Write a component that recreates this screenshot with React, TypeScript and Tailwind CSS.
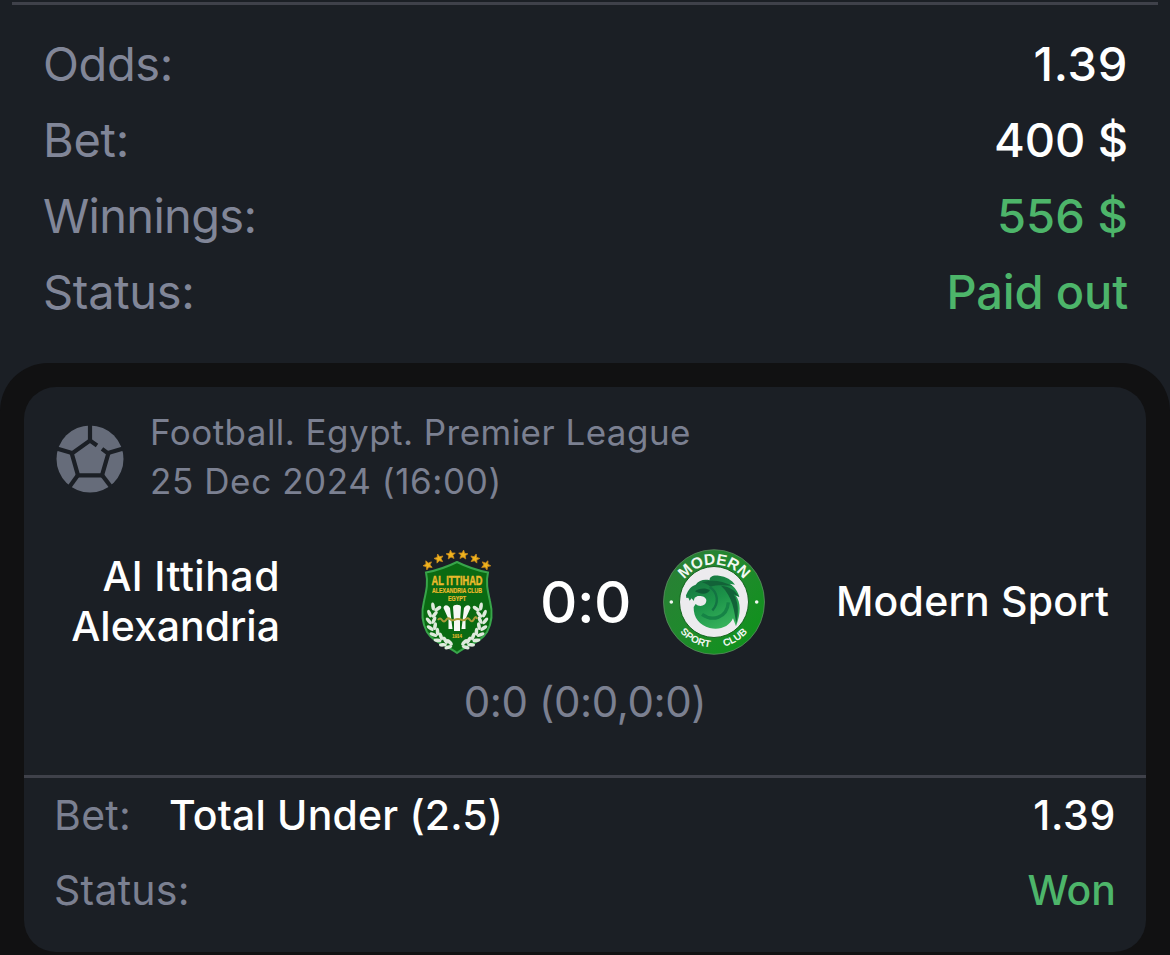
import React from "react";

type SummaryRow = { label: string; value: string; tone: string; spacing: string; valueSpacing: string };

const summary: SummaryRow[] = [
  { label: "Odds:", value: "1.39", tone: "text-white", spacing: "tracking-[-0.400px]", valueSpacing: "tracking-[0.700px]" },
  { label: "Bet:", value: "400 $", tone: "text-white", spacing: "tracking-[-0.300px]", valueSpacing: "tracking-[-0.100px]" },
  { label: "Winnings:", value: "556 $", tone: "text-[#4db56a]", spacing: "tracking-[-0.700px]", valueSpacing: "tracking-[0.100px]" },
  { label: "Status:", value: "Paid out", tone: "text-[#4db56a]", spacing: "tracking-[-0.300px]", valueSpacing: "tracking-[-0.150px]" },
];

function BallIcon() {
  return (
    <svg className="h-[68px] w-[68px] shrink-0" viewBox="0 0 68 68" fill="none">
      <circle cx="34" cy="34" r="33.5" fill="#666c7a" />
      <g stroke="#1b1f25" strokeWidth="4.200">
        <path d="M34 0V16" />
        <path d="M0 23.300L16 28" />
        <path d="M68 23.300L52 28" />
        <path d="M22 50L13 62.500" />
        <path d="M46 50L55.500 62.500" />
        <path d="M41 20.500L34 15.500L15.800 28.500L22 50.300H46L52.300 28.500L46 23.900" />
      </g>
    </svg>
  );
}

const starPath = "M0 -4.600L1.300 -1.500L4.600 -1.300L2.100 0.800L2.900 4L0 2.300L-2.900 4L-2.100 0.800L-4.600 -1.300L-1.300 -1.500Z";
const stars = [
  { x: 8.8, y: 17, r: -25 },
  { x: 19.8, y: 10.5, r: -15 },
  { x: 31.8, y: 6.7, r: -5 },
  { x: 44.2, y: 6.7, r: 5 },
  { x: 56, y: 10.5, r: 15 },
  { x: 67, y: 17, r: 25 },
];
const leaves = [
  { x: 31, y: 97, r: -75 },
  { x: 26, y: 95, r: -62 },
  { x: 21, y: 91, r: -50 },
  { x: 17, y: 86, r: -35 },
  { x: 14, y: 80, r: -22 },
  { x: 12.5, y: 73.5, r: -8 },
  { x: 13, y: 67, r: 8 },
  { x: 16, y: 60.5, r: 24 },
];

function Laurel() {
  return (
    <g fill="#dfeadd">
      {leaves.map((l) => (
        <g key={l.y} transform={`translate(${l.x} ${l.y}) rotate(${l.r})`}>
          <ellipse cx="-2.600" cy="-1" rx="1.800" ry="4" transform="rotate(-32 -2.600 -1)" />
          <ellipse cx="2.600" cy="-1" rx="1.800" ry="4" transform="rotate(32 2.600 -1)" />
        </g>
      ))}
    </g>
  );
}

function IttihadCrest() {
  return (
    <svg className="h-[108px] w-[76px] shrink-0 overflow-visible" viewBox="0 0 76 108">
      {stars.map((s) => (
        <path key={s.x} d={starPath} fill="#f0b41e" stroke="#c98a1c" strokeWidth="0.800" transform={`translate(${s.x} ${s.y}) rotate(${s.r})`} />
      ))}
      <path
        d="M38 14C30 18 20 22 7 24.500C9.500 35 7 44 5 53C2.500 63 3 75 8 84C14 94 27 97 38 105C49 97 62 94 68 84C73 75 73.500 63 71 53C69 44 66.500 35 69 24.500C56 22 46 18 38 14Z"
        fill="#0a6a12"
        stroke="#38a54a"
        strokeWidth="2"
      />
      <Laurel />
      <g transform="translate(76 0) scale(-1 1)">
        <Laurel />
      </g>
      <g fill="#f6f8f5">
        <path d="M34 59C34 56 42 56 42 59L41 73V83H35V73Z" />
        <path d="M32.500 73L31 60C28 56 25 57 24.500 60L29.500 71V81H33.500Z" />
        <path d="M43.500 73L45 60C48 56 51 57 51.500 60L46.500 71V81H42.500Z" />
      </g>
      <path d="M19 72Q21 69 23 72T27 72T31 71T35 72T39 71T43 72T47 71T51 72T55 71T58 71" fill="none" stroke="#a99a38" strokeWidth="2" />
      <g fontFamily="Liberation Sans, Arial, sans-serif" fontWeight="700" textAnchor="middle" fill="#edbb2c" stroke="#edbb2c">
        <text x="38" y="36.500" fontSize="12" strokeWidth="0.400" textLength="51" lengthAdjust="spacingAndGlyphs">AL ITTIHAD</text>
        <text x="38" y="45" fontSize="7" strokeWidth="0.200" textLength="50" lengthAdjust="spacingAndGlyphs">ALEXANDRIA CLUB</text>
        <text x="38" y="52.500" fontSize="6.500" strokeWidth="0.200" textLength="18" lengthAdjust="spacingAndGlyphs">EGYPT</text>
        <text x="38" y="89.500" fontSize="5" strokeWidth="0" textLength="10">1914</text>
      </g>
    </svg>
  );
}

function ModernCrest() {
  return (
    <svg className="h-[108px] w-[104px] shrink-0 overflow-visible" viewBox="0 0 104 108">
      <defs>
        <linearGradient id="ring" x1="0" y1="0" x2="1" y2="1">
          <stop offset="0" stopColor="#2c7d38" />
          <stop offset="0.500" stopColor="#1f8a2c" />
          <stop offset="1" stopColor="#0b9417" />
        </linearGradient>
        <linearGradient id="mane" x1="0.200" y1="0" x2="0.700" y2="1">
          <stop offset="0" stopColor="#16733f" />
          <stop offset="0.500" stopColor="#1c9349" />
          <stop offset="1" stopColor="#38b45c" />
        </linearGradient>
        <path id="arcTop" d="M15 54A37 37.500 0 0 1 89 54" />
        <path id="arcBottom" d="M7 54A45 45.500 0 0 0 97 54" />
      </defs>
      <ellipse cx="52" cy="54" rx="50.500" ry="52.300" fill="url(#ring)" stroke="#5c8d61" strokeWidth="0.800" />
      <ellipse cx="52" cy="54" rx="34.500" ry="35.500" fill="#ecebee" stroke="#15651e" strokeWidth="1" />
      <g transform="translate(15 17) scale(0.3333)">
        <path
          d="M27 91C34 74 42 64 56 59C65 46 82 42 98 46C96 36 108 29 126 32C146 34 166 46 174 59L158 56C174 66 183 80 187 96L176 91C192 113 192 145 177 184L168 160C158 184 128 197 98 189C68 181 49 158 50 126L56 117C66 127 88 124 88 106C87 96 76 92 62 93L53 98L50 108L44 100L38 107L34 98L28 99Z"
          fill="url(#mane)"
        />
        <path d="M75 52C105 42 135 48 166 62C145 61 120 58 100 65C92 58 84 55 75 52ZM132 62C160 65 176 78 187 96L170 88C184 110 186 140 178 175C172 140 168 95 132 62Z" fill="#126238" />
        <path d="M54 79C66 68 86 68 99 75C93 88 73 90 54 79Z" fill="#0f5c36" />
        <path d="M98 66C124 82 126 115 106 136" fill="none" stroke="#137343" strokeWidth="7" />
        <path d="M75 148C105 170 150 160 154 112" fill="none" stroke="#168346" strokeWidth="10" />
      </g>
      <circle cx="9.300" cy="54" r="1.800" fill="#f2f7f2" />
      <circle cx="94.700" cy="54" r="1.800" fill="#f2f7f2" />
      <g fill="#f2f7f2" fontFamily="Liberation Sans, Inter, sans-serif" fontWeight="700">
        <text fontSize="15.500" textAnchor="middle">
          <textPath href="#arcTop" startOffset="50%">MODERN</textPath>
        </text>
        <text fontSize="10" textAnchor="middle">
          <textPath href="#arcBottom" startOffset="35%">SPORT</textPath>
        </text>
        <text fontSize="10" textAnchor="middle">
          <textPath href="#arcBottom" startOffset="67%">CLUB</textPath>
        </text>
      </g>
    </svg>
  );
}

export default function App() {
  return (
    <main className="flex h-[955px] w-[1170px] flex-col overflow-hidden bg-[#1b1f25] pt-[2px] font-['Inter',sans-serif] text-white">
      <div className="mx-3 h-[3px] shrink-0 bg-[#3f414a]" />
      <section className="flex flex-col pt-[21px] pr-[42px] pb-[33px] pl-[43px]">
        {summary.map((row) => (
          <div key={row.label} className="flex h-[76px] justify-between text-[47px] leading-[76px] whitespace-pre">
            <span className={`text-[#818698] ${row.spacing}`}>{row.label}</span>
            <span className={`font-medium ${row.tone} ${row.valueSpacing}`}>{row.value}</span>
          </div>
        ))}
      </section>

      <section className="flex-1 rounded-t-[48px] bg-[#111112] px-6 pt-6">
        <article className="flex h-[565px] flex-col rounded-[32px] bg-[#1b1f25]">
          <header className="flex h-[134px] gap-[26px] pt-[21px] pl-8">
            <div className="pt-[17px]">
              <BallIcon />
            </div>
            <div className="text-[35px] leading-[49px] whitespace-nowrap text-[#7b8091]">
              <p className="tracking-[0.460px]">Football. Egypt. Premier League</p>
              <p className="tracking-[0.600px]">25 Dec 2024 (16:00)</p>
            </div>
          </header>

          <div className="flex h-[160px] items-center">
            <div className="w-[256px] text-right text-[41px] leading-[50px] font-medium">
              <p className="tracking-[0.500px]">Al Ittihad</p>
              <p>Alexandria</p>
            </div>
            <div className="flex flex-1 items-center pt-[2px] pl-[139px]">
              <IttihadCrest />
              <p className="w-[167px] pl-[14px] text-center text-[58px] leading-[70px] font-medium tracking-[-0.500px]">0:0</p>
              <ModernCrest />
            </div>
            <p className="w-[310px] text-[41px] leading-[50px] font-medium tracking-[0.200px] whitespace-nowrap">Modern Sport</p>
          </div>

          <p className="h-[94px] text-center text-[42px] leading-[42px] tracking-[-0.400px] text-[#7b8091]">0:0 (0:0,0:0)</p>

          <div className="h-[3px] bg-[#3f414a]" />

          <footer className="pr-[30px] pl-[30px] text-[41px] leading-[75px]">
            <div className="flex">
              <span className="w-[115px] tracking-[0.300px] text-[#7b8091]">Bet:</span>
              <span className="flex-1 font-medium tracking-[0.180px]">Total Under (2.5)</span>
              <span className="font-medium tracking-[0.700px]">1.39</span>
            </div>
            <div className="flex justify-between">
              <span className="tracking-[0.250px] text-[#7b8091]">Status:</span>
              <span className="font-medium text-[#4db56a]">Won</span>
            </div>
          </footer>
        </article>
      </section>
    </main>
  );
}
